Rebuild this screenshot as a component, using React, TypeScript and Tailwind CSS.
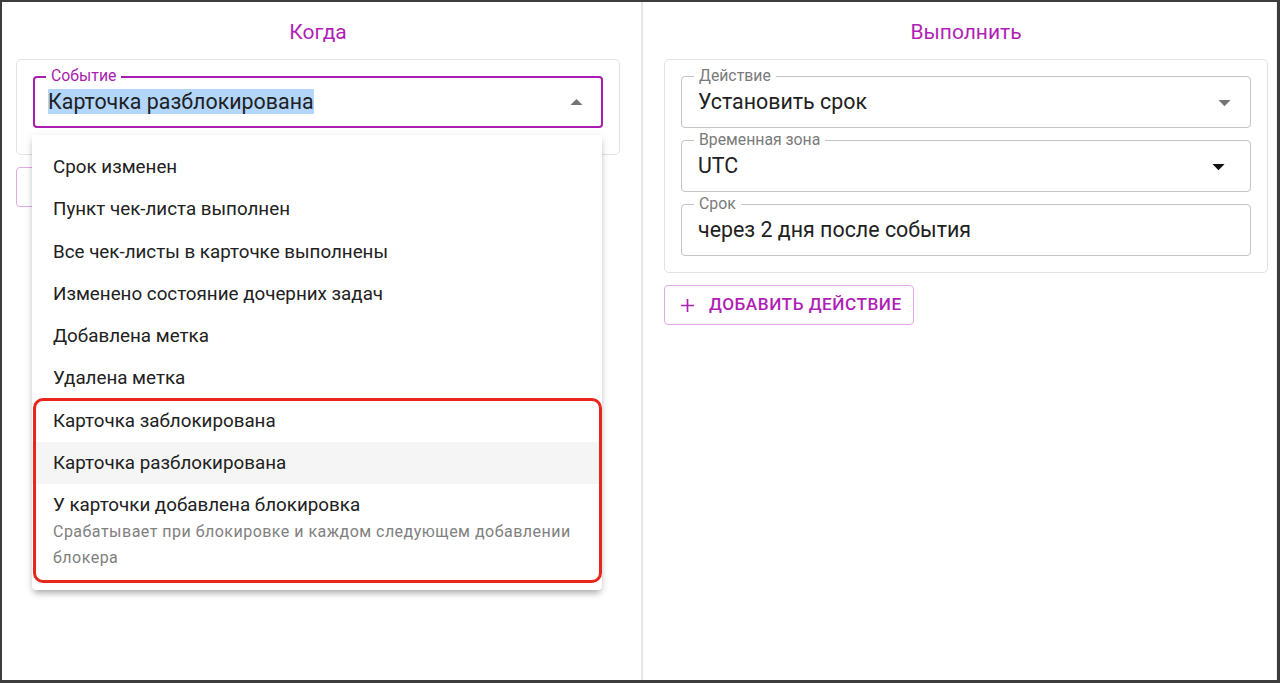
import React from "react";

const PURPLE = "text-[#b01fb5]";

function Caret({ up = false, color = "#757575" }: { up?: boolean; color?: string }) {
  return (
    <svg width="29" height="29" viewBox="0 0 24 24" className="shrink-0">
      <path d={up ? "M7 14l5-5 5 5z" : "M7 10l5 5 5-5z"} fill={color} />
    </svg>
  );
}

function Field({
  label,
  value,
  caret,
  caretColor,
  caretClass = "",
}: {
  label: string;
  value: string;
  caret?: boolean;
  caretColor?: string;
  caretClass?: string;
}) {
  return (
    <div className="relative h-[52px] rounded-[4px] border border-[#c4c4c4] flex items-center pl-4 pr-[11px]">
      <span className="absolute left-[12px] top-[-11px] bg-white px-[5px] text-[15.8px] leading-[20px] text-[#7a7a7a]">
        {label}
      </span>
      <span className="flex-1 text-[21.4px] text-[#212121]">{value}</span>
      {caret && (
        <span className={caretClass}>
          <Caret color={caretColor} />
        </span>
      )}
    </div>
  );
}

const items = [
  "Срок изменен",
  "Пункт чек-листа выполнен",
  "Все чек-листы в карточке выполнены",
  "Изменено состояние дочерних задач",
  "Добавлена метка",
  "Удалена метка",
];

export default function App() {
  return (
    <div className="relative w-[1280px] h-[683px] bg-white border-t-2 border-l-2 border-b-[3px] border-r-[3px] border-[#3d3d3d] flex font-['Roboto','Noto_Sans',sans-serif] overflow-hidden">
      {/* Left column */}
      <div className="w-[639px] pl-[14px] pt-[18px]">
        <div className="w-[604px]">
          <div className={`h-6 text-center text-[21px] leading-6 ${PURPLE}`}>Когда</div>
          <div className="mt-[15px] rounded-[5px] border border-[#e2e2e2] pt-4 pb-[26px] px-4">
            <div className="relative h-[52px] rounded-[4px] border-2 border-[#a91db0] flex items-center pl-[13px] pr-[10px]">
              <span className="absolute left-[11px] top-[-12px] bg-white px-[5px] text-[15.8px] leading-[20px] text-[#a91db0]">
                Событие
              </span>
              <span className="flex-1 text-[21.4px] leading-[26px] text-[#212121]">
                <span className="bg-[#b3d6fd]">Карточка разблокирована</span>
              </span>
              <Caret up />
            </div>
          </div>
          <div className="mt-3 h-10 w-[180px] rounded-[4px] border border-[#e3a9e7]" />
        </div>
      </div>

      {/* Divider */}
      <div className="w-[2px] bg-[#e6e6e6]" />

      {/* Right column */}
      <div className="flex-1 pl-[21px] pt-[18px] border-r border-[#efefef]">
        <div className="w-[604px]">
          <div className={`h-6 text-center text-[21px] leading-6 ${PURPLE}`}>Выполнить</div>
          <div className="mt-[15px] rounded-[5px] border border-[#e2e2e2] p-4 flex flex-col gap-3">
            <Field label="Действие" value="Установить срок" caret caretColor="#757575" />
            <Field label="Временная зона" value="UTC" caret caretColor="#111111" caretClass="mr-[6px]" />
            <Field label="Срок" value="через 2 дня после события" />
          </div>
          <button className="mt-[12px] h-10 w-[250px] rounded-[4px] border border-[#e3a9e7] flex items-center pl-[16px] gap-[15px]">
            <svg width="13" height="13" viewBox="0 0 14 14">
              <path d="M7 0v14M0 7h14" stroke="#b01fb5" strokeWidth="1.8" />
            </svg>
            <span className={`text-[17.2px] font-medium tracking-[0.03em] uppercase ${PURPLE}`}>
              Добавить действие
            </span>
          </button>
        </div>
      </div>

      {/* Dropdown menu */}
      <div className="absolute left-[30px] top-[133px] w-[570px] bg-white rounded-b-[4px] shadow-[0_5px_6px_-2px_rgba(0,0,0,0.25),0_2px_8px_rgba(0,0,0,0.12)] pt-[11px] pb-[12px]">
        {items.map((t) => (
          <div key={t} className="h-[42.25px] flex items-center px-[21px] text-[18.8px] text-[#212121]">
            {t}
          </div>
        ))}
        <div className="relative">
          <div className="h-[42.25px] flex items-center px-[21px] text-[18.8px] text-[#212121]">
            Карточка заблокирована
          </div>
          <div className="h-[42.25px] flex items-center px-[21px] text-[18.8px] text-[#212121] bg-[#f5f5f5]">
            Карточка разблокирована
          </div>
          <div className="pl-[21px] pr-[8px] pt-2 pb-2">
            <div className="text-[18.8px] leading-[26px] text-[#212121]">У карточки добавлена блокировка</div>
            <div className="text-[16px] leading-[26px] tracking-[0.03em] text-[#808080] translate-y-[1px]">
              Срабатывает при блокировке и каждом следующем добавлении блокера
            </div>
          </div>
          <div className="absolute left-[1px] right-0 top-[-2px] bottom-[-5px] rounded-[10px] border-[3px] border-[#e8261c] pointer-events-none" />
        </div>
      </div>
    </div>
  );
}
